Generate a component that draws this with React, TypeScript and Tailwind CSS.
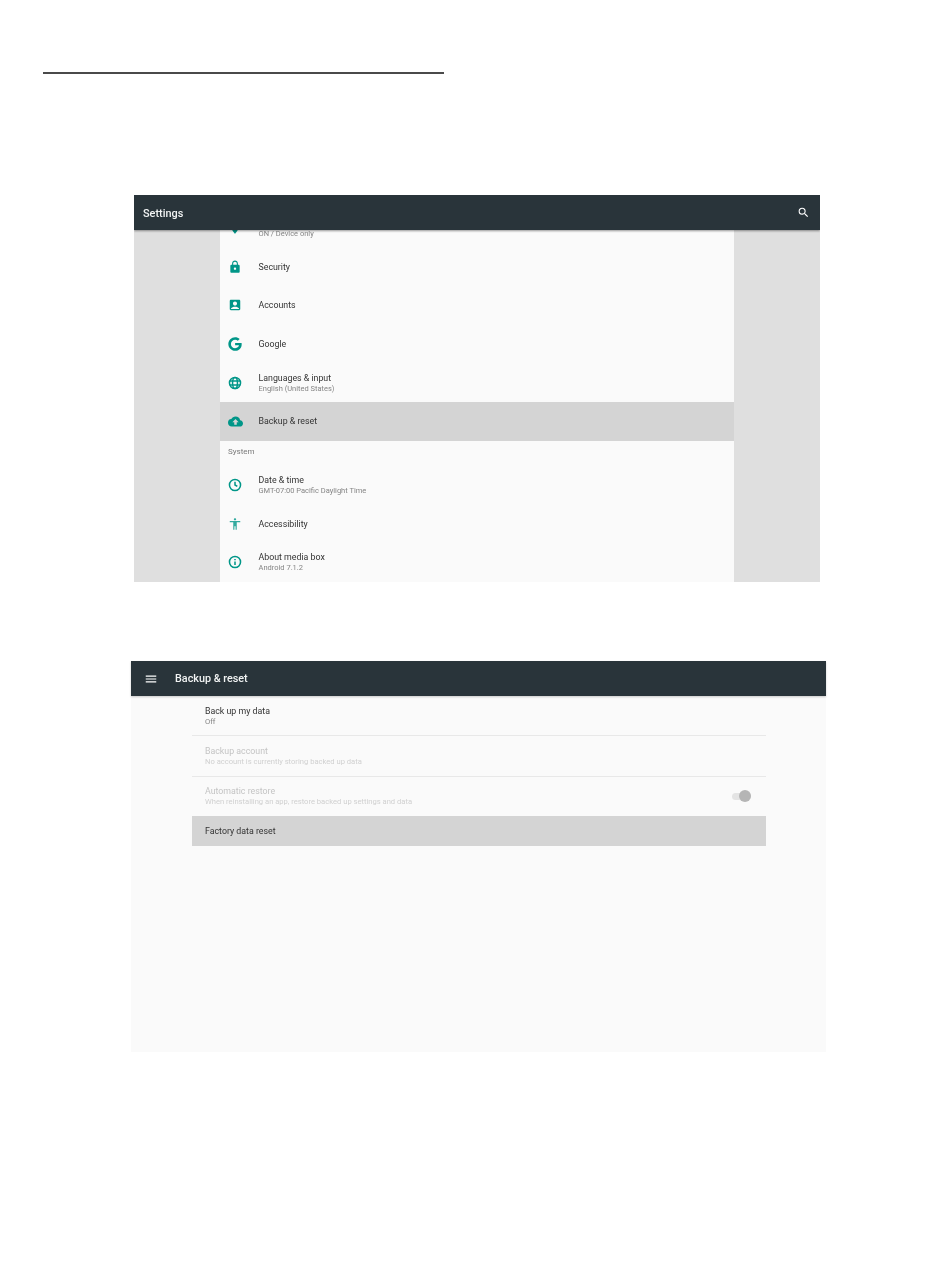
import type { ReactNode } from "react"
import { FaGoogle } from "react-icons/fa"
import {
  MdAccessibility,
  MdAccountBox,
  MdBackup,
  MdLocationOn,
  MdLock,
  MdMenu,
  MdSearch,
} from "react-icons/md"

interface IRow {
  icon: ReactNode
  title?: string
  sub?: string
  active?: boolean
}

// the reference's ring icons are heavier than the material outlines
const GlobeIcon = () => (
  <svg width="14" height="14" viewBox="0 0 24 24" fill="none" stroke="currentColor" strokeWidth="2.6">
    <circle cx="12" cy="12" r="9.5" />
    <ellipse cx="12" cy="12" rx="4.2" ry="9.5" />
    <path d="M3 8.5h18M3 15.5h18" />
  </svg>
)

const ClockIcon = () => (
  <svg width="14" height="14" viewBox="0 0 24 24" fill="none" stroke="currentColor" strokeWidth="2.6">
    <circle cx="12" cy="12" r="9.5" />
    <path d="M12 6.5V12l4 2.5" />
  </svg>
)

const InfoIcon = () => (
  <svg width="14" height="14" viewBox="0 0 24 24" fill="none" stroke="currentColor" strokeWidth="2.6">
    <circle cx="12" cy="12" r="9.5" />
    <path d="M12 11v6M12 7v2" />
  </svg>
)

const SettingsRow = ({ icon, title, sub, active }: IRow) => {
  return (
    <div className={`flex h-[38.7px] items-center pl-[8px] ${active ? "bg-[#d4d4d4]" : ""}`}>
      <div className="flex w-[30.5px] items-center text-[#009688]">{icon}</div>
      <div className="flex flex-col">
        {title && <span className="text-[8.8px] leading-[12px] text-[#333333]">{title}</span>}
        {sub && <span className="text-[7.5px] leading-[10px] text-[#858585]">{sub}</span>}
      </div>
    </div>
  )
}

const ResetRow = ({ title, sub, dim, first }: { title: string; sub: string; dim?: boolean; first?: boolean }) => {
  return (
    <div className={`flex flex-col justify-center border-b border-[#e8e8e8] pl-[13px] ${first ? "h-[40px]" : "h-[40.5px]"}`}>
      <span className={`text-[8.8px] leading-[12px] ${dim ? "text-[#c4c4c4]" : "text-[#333333]"}`}>{title}</span>
      <span className={`text-[7.6px] leading-[10px] ${dim ? "text-[#d0d0d0]" : "text-[#858585]"}`}>{sub}</span>
    </div>
  )
}

const App = () => {
  return (
    <div className="min-h-[1284px] w-[950px] overflow-hidden bg-white pt-[72px] font-['Roboto',sans-serif]">
      <div className="ml-[43px] h-[2px] w-[401px] bg-[#4a4a4a]" />

      <div className="ml-[134px] mt-[121px] flex h-[387px] w-[686px] flex-col overflow-hidden bg-[#dfdfdf] blur-[0.3px]">
        <div className="relative z-10 flex h-[35px] shrink-0 items-center justify-between bg-[#29343a] pl-[9px] pr-[10px] shadow-[0_1px_2px_rgba(0,0,0,0.4)]">
          <span className="mt-[3px] text-[10.9px] font-medium text-[#f2f4f4]">Settings</span>
          <MdSearch size={13} className="text-white" />
        </div>
        <div className="ml-[86px] w-[514px] flex-1 bg-[#fafafa]">
          <div className="-mt-[21.4px]">
            <SettingsRow icon={<MdLocationOn size={14} />} title="Location" sub="ON / Device only" />
            <SettingsRow icon={<MdLock size={14} />} title="Security" />
            <SettingsRow icon={<MdAccountBox size={14} />} title="Accounts" />
            <SettingsRow icon={<FaGoogle size={14} />} title="Google" />
            <SettingsRow icon={<GlobeIcon />} title="Languages & input" sub="English (United States)" />
            <SettingsRow icon={<MdBackup size={15} />} title="Backup & reset" active />
            <div className="flex h-[25px] items-start pl-[8px] pt-[5px] text-[8px] leading-[12px] text-[#7a7a7a]">System</div>
            <SettingsRow icon={<ClockIcon />} title="Date & time" sub="GMT-07:00 Pacific Daylight Time" />
            <SettingsRow icon={<MdAccessibility size={14} className="opacity-80" />} title="Accessibility" />
            <SettingsRow icon={<InfoIcon />} title="About media box" sub="Android 7.1.2" />
          </div>
        </div>
      </div>

      <div className="ml-[131px] mt-[79px] flex h-[391px] w-[695px] flex-col bg-[#fafafa] blur-[0.3px]">
        <div className="flex h-[35px] shrink-0 items-center bg-[#29343a] pl-[13px] shadow-[0_1px_2px_rgba(0,0,0,0.2)]">
          <MdMenu size={14} className="text-white" />
          <span className="ml-[17px] mt-[2px] text-[10.8px] font-medium text-[#f2f4f4]">Backup &amp; reset</span>
        </div>
        <div className="ml-[61px] w-[574px]">
          <ResetRow title="Back up my data" sub="Off" first />
          <ResetRow title="Backup account" sub="No account is currently storing backed up data" dim />
          <div className="flex h-[39.5px] items-center justify-between pl-[13px] pr-[15px]">
            <div className="flex flex-col">
              <span className="text-[8.8px] leading-[12px] text-[#c4c4c4]">Automatic restore</span>
              <span className="text-[7.6px] leading-[10px] text-[#d0d0d0]">When reinstalling an app, restore backed up settings and data</span>
            </div>
            <div className="relative h-[7px] w-[19px] rounded-full bg-[#e4e4e4]">
              <div className="absolute -top-[2.5px] right-0 h-[12px] w-[12px] rounded-full bg-[#b5b5b5]" />
            </div>
          </div>
          <div className="flex h-[30px] items-center bg-[#d4d4d4] pl-[13px] pt-[1px] text-[8.8px] text-[#333333]">Factory data reset</div>
        </div>
      </div>
    </div>
  )
}

export default App
